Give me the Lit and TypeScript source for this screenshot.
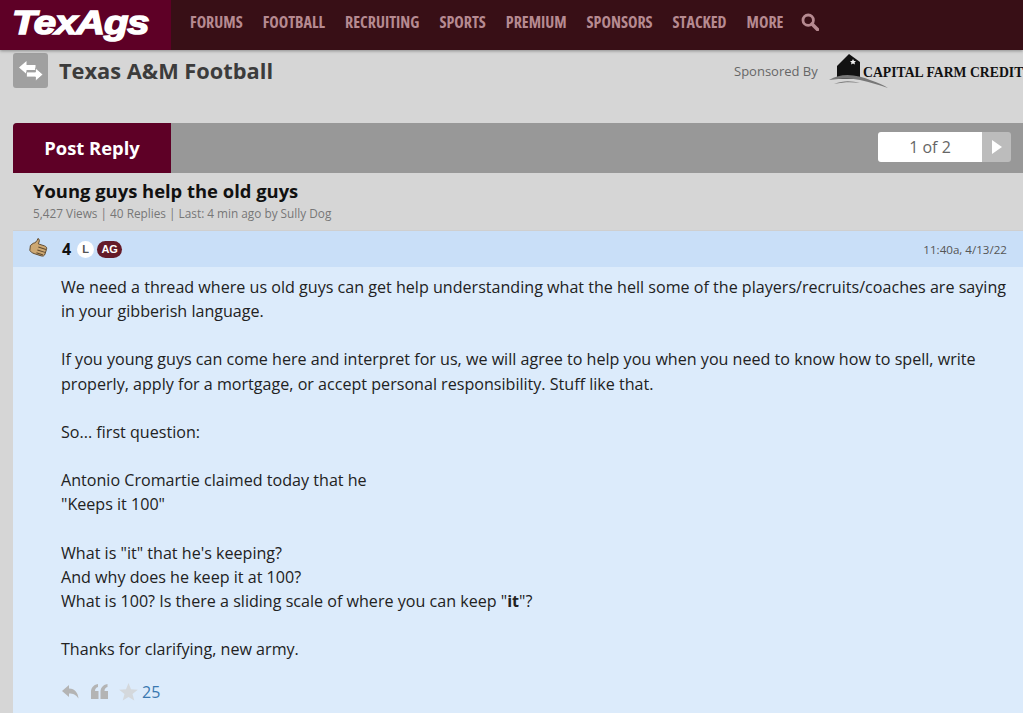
import { LitElement, html, css } from "lit";
import { customElement } from "lit/decorators.js";

const NAV = ["FORUMS", "FOOTBALL", "RECRUITING", "SPORTS", "PREMIUM", "SPONSORS", "STACKED", "MORE"];

@customElement("app-root")
export class AppRoot extends LitElement {
  static styles = css`
    :host { display: block; height: 713px; overflow: hidden; background: #d6d6d6; font-family: "Open Sans", "Noto Sans", sans-serif; color: #111; }
    .top { display: flex; height: 50px; background: #380f16; box-shadow: 0 1px 3px rgba(0,0,0,.35); position: relative; }
    .logo { width: 171px; background: #5e0026; display: flex; align-items: center; box-sizing: border-box; padding: 0 0 0 12px; overflow: hidden; }
    .logo span { display: inline-block; color: #fff; font: italic 900 34px/1 "Liberation Sans", sans-serif; -webkit-text-stroke: 1.5px #fff; letter-spacing: -1px; transform-origin: left center; transform: scaleX(1.18); margin-top: -7px; }
    nav { display: flex; align-items: center; padding-left: 19px; gap: 0; }
    nav a { color: #b68a91; font-weight: 700; font-size: 16px; font-stretch: 75%; margin-right: 20px; line-height: 1; margin-top: -6px; }
    nav svg { margin-top: -6px; margin-left: -2px; }
    .sub { display: flex; height: 73px; padding-left: 13px; box-sizing: border-box; }
    .swap { width: 35px; height: 35px; margin-top: 3px; background: #a0a0a0; border-radius: 3px; display: flex; align-items: center; justify-content: center; }
    .sub h1 { margin: 2px 0 0 11px; font-size: 21.8px; line-height: 37px; font-weight: 700; color: #3c3c3c; flex: 1; }
    .spons { display: flex; align-items: flex-start; width: 289px; flex: none; overflow: hidden; white-space: nowrap; }
    .spons .lbl { font-size: 13px; font-weight: 500; color: #666; margin-top: 13px; line-height: 17px; }
    .spons svg { margin: 3px 0 0 10px; flex: none; }
    .spons .cfc { display: inline-block; font: 700 15.5px/1 "Liberation Serif", serif; color: #111; margin: 14px 0 0 -27px; transform-origin: left center; transform: scaleX(.885); }
    .card { margin-left: 13px; width: 1010px; border-radius: 4px 0 0 0; overflow: hidden; }
    .tabbar { display: flex; height: 50px; background: #989898; align-items: center; }
    .tab { width: 158px; height: 48px; padding-bottom: 2px; background: #5e0026; color: #fff; font-weight: 700; font-size: 18.4px; display: flex; align-items: center; justify-content: center; margin-right: auto; }
    .pager { display: flex; height: 30px; margin-right: 12px; border-radius: 3px; overflow: hidden; margin-top: -2px; }
    .pager .num { width: 104px; background: #fff; color: #666; font-size: 16px; font-weight: 400; text-align: center; line-height: 30px; }
    .pager .next { width: 29px; background: #bcbcbc; display: flex; align-items: center; justify-content: center; }
    .title { height: 58px; padding: 5px 0 0 20px; box-sizing: border-box; border-bottom: 1px solid #cfcfcf; background: #d6d6d6; }
    .title h2 { margin: 0; font-size: 18.4px; line-height: 25px; font-weight: 700; color: #111; }
    .title p { margin: 1px 0 0; font-size: 11.8px; line-height: 18px; font-weight: 500; color: #777; }
    .phead { height: 36px; background: #c9dff8; display: flex; align-items: center; padding: 0 16px 0 15px; box-sizing: border-box; }
    .num4 { font-weight: 700; font-size: 16px; margin-left: 14px; color: #111; }
    .bdgL { width: 17px; height: 17px; border-radius: 50%; background: #fff; color: #555; font: 700 11px/17px "Liberation Sans", sans-serif; text-align: center; margin-left: 6px; }
    .bdgA { height: 17px; width: 25px; border-radius: 9px; background: #641a28; color: #fff; font: 700 11px/17px "Liberation Sans", sans-serif; text-align: center; margin-left: 3px; }
    .time { margin-left: auto; font-size: 11.6px; font-weight: 400; color: #555; }
    .body { background: #dcebfb; padding: 8px 15px 0 48px; height: 500px; box-sizing: border-box; }
    .msg { font-size: 16.1px; line-height: 24.15px; color: #222; white-space: pre-line; }
    .acts { display: flex; align-items: center; margin-top: 19px; color: #3a78b0; font-size: 16px; padding-left: 1px; }
    .acts svg { display: block; }
    .gap1 { margin-left: 11px; }
    .cnt { margin-left: 4px; }
  `;

  render() {
    return html`
      <div class="top">
        <div class="logo"><span>TexAgs</span></div>
        <nav>
          ${NAV.map((n) => html`<a>${n}</a>`)}
          <svg width="18" height="18" viewBox="0 0 18 18"><circle cx="7.200" cy="7.200" r="5.200" fill="none" stroke="#b68a91" stroke-width="2.800"/><path d="M11 11l5.500 5.500" stroke="#b68a91" stroke-width="3.600" stroke-linecap="round"/></svg>
        </nav>
      </div>
      <div class="sub">
        <div class="swap">
          <svg width="24" height="20" viewBox="0 0 24 20" fill="#fff"><path d="M0 6.500L7.500 0v4h9v5h-9v4z"/><path d="M24 13.500L16.500 7v4h-9v5h9v4z" stroke="#a0a0a0" stroke-width=".8"/></svg>
        </div>
        <h1>Texas A&amp;M Football</h1>
        <div class="spons">
          <span class="lbl">Sponsored By</span>
          <svg width="62" height="36" viewBox="0 0 62 36">
            <path d="M9 26V13L21 1l11 8v17z" fill="#111"/>
            <path d="M25 6l1 2 2 0-1.500 1.500.5 2-2-1-2 1 .5-2L22 8l2 0z" fill="#eee"/>
            <path d="M1 27C14 19 30 22 42 27c8 3 14 5 18 8-9-3-18-6-28-8-10-2-20-1-31 0z" fill="#777"/>
            <path d="M6 31c10-4 18-3 26-1-8-1-16-1-26 1z" fill="#777"/>
          </svg>
          <span class="cfc">CAPITAL FARM CREDIT</span>
        </div>
      </div>
      <div class="card">
        <div class="tabbar">
          <div class="tab">Post Reply</div>
          <div class="pager">
            <div class="num">1 of 2</div>
            <div class="next"><svg width="12" height="16" viewBox="0 0 12 16"><path d="M1 1l10 7-10 7z" fill="#fff"/></svg></div>
          </div>
        </div>
        <div class="title">
          <h2>Young guys help the old guys</h2>
          <p>5,427 Views | 40 Replies | Last: 4 min ago by Sully Dog</p>
        </div>
        <div class="phead">
          <svg width="20" height="20" viewBox="0 0 20 20" style="margin-top:-3px">
            <g transform="rotate(18 10 10)">
              <path d="M4 7c2-1 3-3 3-6 2 0 2.500 2 2 5h6.500c2 0 3 1 3 2.500v5c0 2-1 3-3 3H8c-2 0-3-.5-5-1.500L2 10z" fill="#cda873" stroke="#5f4a30" stroke-width=".9"/>
              <path d="M10 9h8M10 12h8M10 15h7" stroke="#5f4a30" stroke-width="1"/>
            </g>
          </svg>
          <span class="num4">4</span>
          <span class="bdgL">L</span>
          <span class="bdgA">AG</span>
          <span class="time">11:40a, 4/13/22</span>
        </div>
        <div class="body">
          <div class="msg">We need a thread where us old guys can get help understanding what the hell some of the players/recruits/coaches are saying
in your gibberish language.

If you young guys can come here and interpret for us, we will agree to help you when you need to know how to spell, write
properly, apply for a mortgage, or accept personal responsibility. Stuff like that.

So... first question:

Antonio Cromartie claimed today that he
"Keeps it 100"

What is "it" that he's keeping?
And why does he keep it at 100?
What is 100? Is there a sliding scale of where you can keep "<b>it</b>"?

Thanks for clarifying, new army.</div>
          <div class="acts">
            <svg width="18" height="16" viewBox="0 0 18 16"><path d="M7 1L0 7l7 6V9.500c4 0 7 1 9.500 5C16 9 13 4.500 7 4.500z" fill="#b4b4b4"/></svg>
            <svg class="gap1" width="17" height="15" viewBox="0 0 17 15" fill="#b4b4b4"><path d="M0 15V8c0-4 2-7 7-8v3C5 3.500 4 5 4 7h3.500v8z"/><path d="M9.500 15V8c0-4 2-7 7-8v3c-2 .5-3 2-3 4H17v8z"/></svg>
            <svg class="gap1" width="19" height="18" viewBox="0 0 19 18"><path d="M9.500 0l2.500 6.300 6.800.4-5.300 4.300 1.800 6.600-5.800-3.700-5.800 3.700 1.800-6.600L.2 6.700 7 6.300z" fill="#d4d8dc"/></svg>
            <span class="cnt">25</span>
          </div>
        </div>
      </div>
    `;
  }
}
